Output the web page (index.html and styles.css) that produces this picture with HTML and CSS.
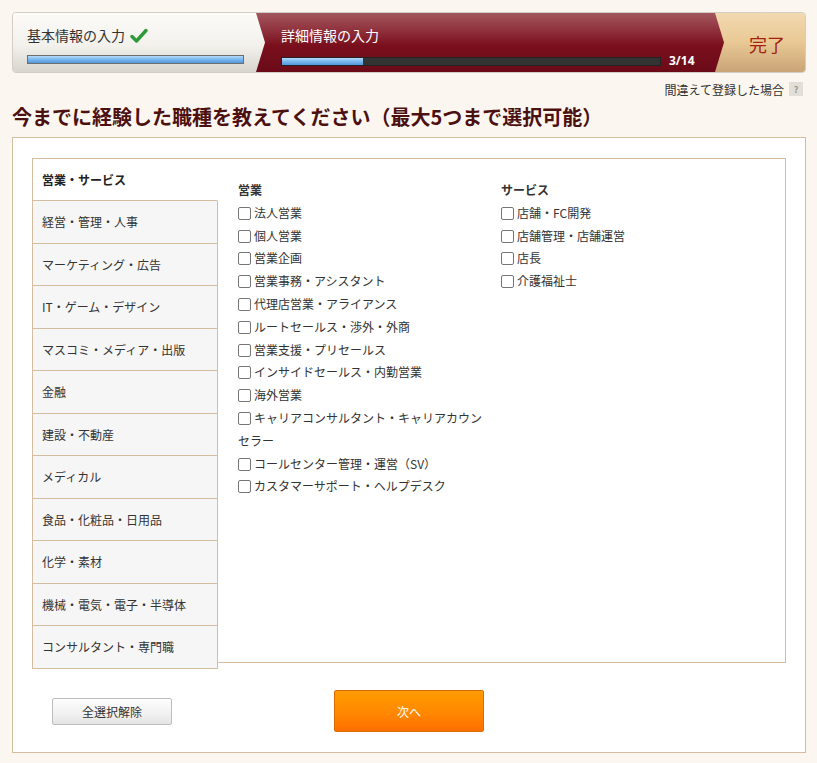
FILE: index.html
```html
<!DOCTYPE html>
<html lang="ja">
<head>
<meta charset="utf-8">
<title>職種選択</title>
<link rel="stylesheet" href="styles.css">
</head>
<body>
<div class="page">
  <div class="steps">
    <div class="step step-done">
      <div class="step-label">基本情報の入力<svg class="check" width="18" height="16" viewBox="0 0 18 16"><path d="M2 8.5 L6.5 13 L16 2.5" fill="none" stroke="#2e9b3a" stroke-width="3.4" stroke-linecap="round" stroke-linejoin="round"/></svg></div>
      <div class="bar bar-light"><div class="bar-fill" style="width:100%"></div></div>
    </div>
    <div class="step step-current">
      <div class="step-label">詳細情報の入力</div>
      <div class="bar-row">
        <div class="bar bar-dark"><div class="bar-fill" style="width:21.4%"></div></div>
        <span class="count">3/14</span>
      </div>
    </div>
    <div class="step step-end">完了</div>
  </div>

  <div class="help">間違えて登録した場合<span class="q">?</span></div>

  <h1 class="title">今までに経験した職種を教えてください（最大5つまで選択可能）</h1>

  <div class="panel">
    <div class="selector">
      <ul class="cats">
        <li class="cat active">営業・サービス</li>
        <li class="cat">経営・管理・人事</li>
        <li class="cat">マーケティング・広告</li>
        <li class="cat">IT・ゲーム・デザイン</li>
        <li class="cat">マスコミ・メディア・出版</li>
        <li class="cat">金融</li>
        <li class="cat">建設・不動産</li>
        <li class="cat">メディカル</li>
        <li class="cat">食品・化粧品・日用品</li>
        <li class="cat">化学・素材</li>
        <li class="cat">機械・電気・電子・半導体</li>
        <li class="cat">コンサルタント・専門職</li>
      </ul>
      <div class="jobs">
        <div class="col">
          <div class="col-title">営業</div>
          <label class="opt"><input type="checkbox">法人営業</label>
          <label class="opt"><input type="checkbox">個人営業</label>
          <label class="opt"><input type="checkbox">営業企画</label>
          <label class="opt"><input type="checkbox">営業事務・アシスタント</label>
          <label class="opt"><input type="checkbox">代理店営業・アライアンス</label>
          <label class="opt"><input type="checkbox">ルートセールス・渉外・外商</label>
          <label class="opt"><input type="checkbox">営業支援・プリセールス</label>
          <label class="opt"><input type="checkbox">インサイドセールス・内勤営業</label>
          <label class="opt"><input type="checkbox">海外営業</label>
          <label class="opt"><input type="checkbox">キャリアコンサルタント・キャリアカウンセラー</label>
          <label class="opt"><input type="checkbox">コールセンター管理・運営（SV）</label>
          <label class="opt"><input type="checkbox">カスタマーサポート・ヘルプデスク</label>
        </div>
        <div class="col">
          <div class="col-title">サービス</div>
          <label class="opt"><input type="checkbox">店舗・FC開発</label>
          <label class="opt"><input type="checkbox">店舗管理・店舗運営</label>
          <label class="opt"><input type="checkbox">店長</label>
          <label class="opt"><input type="checkbox">介護福祉士</label>
        </div>
      </div>
    </div>
    <div class="actions">
      <button class="btn-clear" type="button">全選択解除</button>
      <button class="btn-next" type="button">次へ</button>
    </div>
  </div>
</div>
</body>
</html>
```

FILE: styles.css
```css
* { box-sizing: border-box; }

html, body {
  margin: 0;
  padding: 0;
}

body {
  background: #fbf7f0;
  font-family: "Noto Sans CJK JP", "Noto Sans", sans-serif;
  color: #333;
  font-size: 12px;
}

.page {
  padding: 12px 11px 0 12px;
}

/* progress steps */
.steps {
  display: flex;
  height: 61px;
  border: 1px solid #d2cdc5;
  border-radius: 4px;
  overflow: hidden;
}

.step {
  position: relative;
  height: 100%;
}

.step-done {
  width: 252px;
  flex: none;
  z-index: 3;
  padding: 11px 0 0 14px;
  background: linear-gradient(#fcfbf8 0%, #f3f1ec 55%, #d8d5cf 100%);
  clip-path: polygon(0 0, 243px 0, 252px 50%, 243px 100%, 0 100%);
}

.step-current {
  width: 468px;
  flex: none;
  margin-left: -9px;
  z-index: 2;
  padding: 11px 0 0 25px;
  background: linear-gradient(#a3575e 0%, #8b2a36 35%, #7a0f1d 55%, #6b0b18 100%);
  clip-path: polygon(0 0, 459px 0, 468px 50%, 459px 100%, 0 100%);
}

.step-end {
  flex: 1;
  margin-left: -9px;
  z-index: 1;
  display: flex;
  align-items: center;
  justify-content: center;
  padding-left: 14px;
  padding-top: 2px;
  font-size: 18px;
  color: #a4230f;
  background: linear-gradient(#f2d9b0 0%, #e9c894 50%, #c9a477 100%);
}

.step-label {
  display: flex;
  align-items: center;
  height: 22px;
  font-size: 14px;
  line-height: 22px;
  color: #333;
}

.step-current .step-label {
  color: #fff;
}

.check {
  margin-left: 5px;
  margin-top: 1px;
}

.bar {
  height: 9px;
  margin-top: 9px;
  border: 1px solid #6e6e6e;
  overflow: hidden;
}

.bar-light {
  width: 217px;
  background: #ddd;
}

.bar-dark {
  width: 380px;
  margin-top: 0;
  background: #333;
  border-color: #222;
}

.bar-fill {
  height: 100%;
  background: linear-gradient(#b5dbf9 0%, #7cbaf0 45%, #5298dc 100%);
}

.bar-row {
  display: flex;
  align-items: center;
  gap: 8px;
  margin-top: 9px;
}

.count {
  color: #fff;
  font-weight: bold;
  font-size: 12px;
  line-height: 12px;
  font-family: "Open Sans", "Noto Sans CJK JP", sans-serif;
}

/* help link */
.help {
  display: flex;
  justify-content: flex-end;
  align-items: center;
  height: 14px;
  margin-top: 9px;
  padding-right: 3px;
  font-size: 12px;
  color: #333;
}

.q {
  display: inline-flex;
  align-items: center;
  justify-content: center;
  width: 14px;
  height: 14px;
  margin-left: 5px;
  background: #e3dfd8;
  color: #9a968f;
  font-size: 9px;
  font-weight: bold;
}

.title {
  margin: 8px 0 0;
  font-size: 20px;
  line-height: 26px;
  font-weight: bold;
  color: #4d1010;
}

/* main panel */
.panel {
  margin-top: 7px;
  background: #fff;
  border: 1px solid #d4bc9e;
  padding: 20px 19px 20px;
}

.selector {
  display: flex;
  height: 505px;
  border: 1px solid #d4bc9e;
}

.cats {
  list-style: none;
  margin: 0 0 0 -1px;
  padding: 0;
  width: 186px;
  flex: none;
}

.cat {
  display: flex;
  align-items: center;
  height: 42.5px;
  padding-left: 9px;
  background: #f6f6f6;
  border-left: 1px solid #d4bc9e;
  border-right: 1px solid #d4bc9e;
  border-bottom: 1px solid #d4bc9e;
  font-size: 12px;
  color: #333;
}

.cat.active {
  height: 42px;
  padding-bottom: 1px;
  background: #fff;
  border-right-color: transparent;
  font-weight: bold;
  color: #222;
}

.jobs {
  display: flex;
  gap: 13px;
  padding: 20px 0 0 20px;
}

.col {
  width: 250px;
}

.col-title {
  font-weight: bold;
  font-size: 12px;
  line-height: 22.8px;
  color: #333;
}

.opt {
  display: block;
  font-size: 12px;
  line-height: 22.8px;
  color: #333;
}

.opt input {
  appearance: none;
  -webkit-appearance: none;
  display: inline-block;
  width: 13px;
  height: 13px;
  margin: 0 3px 0 0;
  vertical-align: -2px;
  border: 1px solid #767676;
  border-radius: 2px;
  background: #fff;
}

/* buttons */
.actions {
  display: flex;
  align-items: center;
  margin-top: 27px;
  padding-left: 20px;
}

.btn-clear {
  width: 120px;
  height: 27px;
  border: 1px solid #bdbdbd;
  border-radius: 2px;
  background: linear-gradient(#fdfdfd 0%, #f1f1f1 60%, #e4e4e4 100%);
  font-family: "Noto Sans CJK JP", sans-serif;
  font-size: 12px;
  color: #333;
  padding: 0;
}

.btn-next {
  width: 150px;
  height: 42px;
  margin-left: 162px;
  border: 1px solid #d86c00;
  border-radius: 2px;
  background: linear-gradient(#ff9c00 0%, #ff8a00 50%, #ff6f00 100%);
  font-family: "Noto Sans CJK JP", sans-serif;
  font-size: 12px;
  color: #fff;
  padding: 0;
}
```
